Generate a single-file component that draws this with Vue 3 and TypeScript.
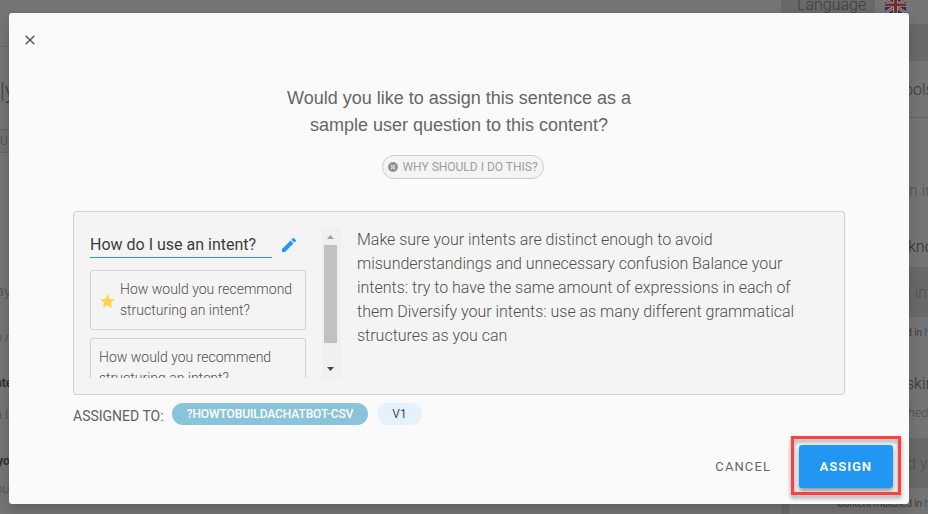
<script setup lang="ts">
import { ref } from 'vue'

interface Intent {
  text: string
  starred: boolean
}

const question = ref('How do I use an intent?')
const intents: Intent[] = [
  { text: 'How would you recemmond structuring an intent?', starred: true },
  { text: 'How would you recommend structuring an intent?', starred: false },
]
</script>

<template>
  <div class="screen">
    <div class="page">
      <aside class="left">
        <div class="l-head"></div>
        <div class="l-title"><span>|y</span></div>
        <div class="l-tab"><span>U</span></div>
        <div class="l-space"></div>
        <div class="l-row say"><span>ay</span></div>
        <div class="l-row note"><span>o r</span></div>
        <div class="l-row strong"><span>nte</span></div>
        <div class="l-row small"><span>a b</span></div>
        <div class="l-row strong second"><span>yo</span></div>
        <div class="l-row small last-line"><span>ou</span></div>
      </aside>
      <main class="right">
        <div class="topbar">
          <span class="language">Language</span>
          <svg class="flag" viewBox="0 0 21 16" preserveAspectRatio="none">
            <rect width="21" height="16" fill="#28305c" />
            <path d="M0 -1L21 15M21 -1L0 15" stroke="#969191" stroke-width="3.4" />
            <path d="M0 -1L21 15M21 -1L0 15" stroke="#793434" stroke-width="1" />
            <path d="M10.5 0V16M0 5.5H21" stroke="#969191" stroke-width="5" />
            <path d="M10.5 0V16M0 5.5H21" stroke="#7d2929" stroke-width="3" />
          </svg>
        </div>
        <div class="band nav"></div>
        <div class="r-row tools">ools</div>
        <div class="r-row first">n in</div>
        <div class="r-row know">kno</div>
        <div class="r-row band reply">n int</div>
        <div class="r-row matched"><span>Content matched in <b>h</b></span></div>
        <div class="r-row asking">skin</div>
        <div class="r-row italic">hed</div>
        <div class="r-row band reply second-reply">d yo</div>
        <div class="r-row matched last"><span>Content matched in <b>h</b></span></div>
      </main>
    </div>

    <section class="dialog" role="dialog">
      <button class="close" aria-label="Close">
        <svg viewBox="0 0 10 10"><path d="M.7.7L9.3 9.3M9.3.7L.7 9.3" stroke="#555" stroke-width="1.4" /></svg>
      </button>
      <h1>Would you like to assign this sentence as a<br />sample user question to this content?</h1>
      <button class="why">
        <svg viewBox="0 0 10 10">
          <circle cx="5" cy="5" r="4.9" fill="#8f8f8f" />
          <path d="M3.2 3.2L6.8 6.8M6.8 3.2L3.2 6.8" stroke="#f1f1f1" stroke-width="1.5" />
          <circle cx="5" cy="5" r=".8" fill="#8f8f8f" />
        </svg>
        <span>WHY SHOULD I DO THIS?</span>
      </button>

      <div class="panel">
        <div class="intents">
          <div class="edit">
            <div class="field">{{ question }}</div>
            <svg viewBox="3 3 18 18"><path fill="#2196f3" d="M3 17.25V21h3.75L17.81 9.94l-3.75-3.75L3 17.25zM20.71 7.04a1 1 0 0 0 0-1.41l-2.34-2.34a1 1 0 0 0-1.41 0l-1.83 1.83 3.75 3.75 1.83-1.83z" /></svg>
          </div>
          <div v-for="item in intents" :key="item.text" class="card" :class="{ starred: item.starred }">
            <svg v-if="item.starred" viewBox="2 2 20 19"><path fill="#ffd54f" d="M12 17.27L18.18 21l-1.64-7.03L22 9.24l-7.19-.61L12 2 9.19 8.63 2 9.24l5.46 4.73L5.82 21z" /></svg>
            <span>{{ item.text }}</span>
          </div>
        </div>
        <div class="scroll">
          <svg viewBox="0 0 7 4"><path d="M0 4L3.5 0L7 4z" fill="#a0a0a0" /></svg>
          <div class="thumb"></div>
          <svg class="down" viewBox="0 0 7 4"><path d="M0 0H7L3.5 4z" fill="#464646" /></svg>
        </div>
        <p>Make sure your intents are distinct enough to avoid<br />misunderstandings and unnecessary confusion Balance your<br />intents: try to have the same amount of expressions in each of<br />them Diversify your intents: use as many different grammatical<br />structures as you can</p>
      </div>

      <div class="assigned">
        <span class="label">ASSIGNED TO:</span>
        <span class="chip bot">?HOWTOBUILDACHATBOT-CSV</span>
        <span class="chip version">V1</span>
      </div>
      <footer>
        <button class="cancel">CANCEL</button>
        <div class="highlight"><button class="assign">ASSIGN</button></div>
      </footer>
    </section>
  </div>
</template>

<style>
body { overflow: hidden; }
</style>

<style scoped>
* { box-sizing: border-box; }
.screen { position: relative; width: 928px; height: 514px; overflow: hidden; background: #757575; font-family: Roboto, sans-serif; }
button { border: 0; padding: 0; background: none; font-family: inherit; }
svg { display: block; flex: none; }

.page { display: flex; justify-content: space-between; height: 514px; color: #505050; white-space: nowrap; }
.left { width: 9px; }
.left > div { display: flex; align-items: center; }
.l-head { height: 47px; border-bottom: 1px solid #686868; }
.l-title { height: 82px; padding-top: 5px; font-size: 22px; font-weight: 300; color: #3f3f3f; }
.l-tab { height: 24px; border: solid #656565; border-width: 1px 0; background: #717171; font-size: 12px; color: #565656; }
.l-space { height: 117px; }
.left > .l-row { height: 42px; font-weight: 300; }
.left > .say { font-size: 15px; margin-left: -4px; }
.left > .note { height: 54px; padding-bottom: 4px; font-size: 13px; font-style: italic; margin-left: -5px; }
.left > .strong { height: 34px; font-size: 12px; font-weight: 700; color: #303030; margin-left: -5px; }
.left > .small { height: 28px; font-size: 13px; margin-left: -5px; }
.left > .second { height: 66px; margin-left: -3px; }
.left > .last-line { margin-left: -5px; margin-top: -20px; }

.right { width: 147px; }
.topbar { display: flex; align-items: flex-start; height: 24px; gap: 10px; }
.language { width: 94px; height: 14px; padding-left: 16px; background: #696969; font-size: 16px; line-height: 10px; font-weight: 300; color: #3d3d3d; }
.flag { width: 21px; height: 14px; }
.band { background: #696969; }
.nav { height: 37px; }
.r-row { display: flex; align-items: center; height: 50px; padding-left: 124px; font-size: 16px; font-weight: 300; }
.tools { height: 57px; padding-left: 123px; color: #393939; border-bottom: 1px solid #646464; }
.first { height: 98px; padding: 46px 0 0 128px; }
.know { height: 51px; padding: 9px 0 0 127px; color: #333; }
.reply { padding-left: 121px; }
.second-reply { padding-left: 126px; }
.matched { height: 31px; padding-left: 56px; font-size: 10px; font-weight: 400; color: #3c3c3c; letter-spacing: -.13px; }
.matched b { color: #285a84; font-weight: 400; }
.asking { height: 48px; color: #333; padding: 22px 0 0 125px; }
.italic { height: 42px; padding: 0 0 10px 127px; font-size: 13px; font-style: italic; }
.last { height: 26px; padding: 4px 0 0 48px; border-left: 8px solid #696969; }

.dialog { position: absolute; left: 9px; top: 13px; width: 900px; height: 491px; padding: 22px 64px 0; border-radius: 3px; background: #fafafa; box-shadow: 0 6px 14px rgba(0, 0, 0, .18); }
.close { display: block; width: 10px; height: 10px; margin-left: -48px; }
.close svg { width: 10px; height: 10px; }
h1 { margin: 40px 0 0; text-align: center; font: 400 18px/27px "Liberation Sans", Arial, sans-serif; color: #666; }
.why { display: flex; align-items: center; justify-content: center; gap: 4px; width: 162px; height: 24px; margin: 16px 0 0 309px; border: 1px solid #ccc; border-radius: 12px; background: #f4f4f4; color: #9e9e9e; font-size: 12px; white-space: nowrap; }
.why svg { width: 10px; height: 10px; }

.panel { display: flex; width: 772px; height: 184px; margin-top: 32px; padding: 16px; border: 1px solid #d1d1d1; border-radius: 3px; background: #f4f4f4; }
.intents { width: 216px; height: 150px; overflow: hidden; }
.edit { display: flex; align-items: center; gap: 10px; height: 30px; margin-bottom: 12px; }
.field { width: 182px; height: 30px; border-bottom: 1px solid #2196f3; font-size: 16px; line-height: 33px; color: #3c3c3c; white-space: nowrap; }
.edit svg { width: 14px; height: 14px; margin-top: 3px; }
.card { display: flex; align-items: center; height: 60px; margin-bottom: 8px; padding: 0 8px; border: 1px solid #d1d1d1; border-radius: 3px; font-size: 14px; line-height: 21px; font-weight: 300; color: #505050; }
.starred { padding: 0 9px; gap: 5px; }
.card svg { width: 15px; height: 14px; margin: 2px 0 0 0; }
.card:not(.starred) { padding-right: 25px; }
.scroll { display: flex; flex-direction: column; align-items: center; width: 19px; height: 150px; margin-left: 16px; padding: 7px 2px 7px 0; background: #f0f0f0; }
.scroll svg { width: 7px; height: 4px; }
.thumb { width: 13px; height: 98px; margin-top: 6px; background: #c1c1c1; }
.scroll .down { margin-top: auto; }
p { margin: 0 0 0 16px; font-size: 16px; line-height: 24px; font-weight: 300; color: #505050; white-space: nowrap; letter-spacing: -.01px; }

.assigned { display: flex; align-items: center; height: 22px; margin-top: 8px; }
.label { width: 99px; padding-top: 4px; font-size: 14px; color: #616161; white-space: nowrap; }
.chip { height: 22px; border-radius: 11px; font-size: 12px; line-height: 22px; text-align: center; }
.bot { width: 196px; background: #89c4d9; color: #fff; font-weight: 500; letter-spacing: -.1px; }
.version { width: 45px; margin-left: 9px; background: #e3f2fd; color: #4a4a4a; }
footer { display: flex; justify-content: flex-end; align-items: center; height: 59px; margin: 11px -56px 0 0; }
.cancel { margin: 2px 20px 0 0; font-size: 13px; letter-spacing: 1.1px; color: #666; }
.highlight { display: flex; align-items: center; justify-content: center; width: 110px; height: 59px; padding-top: 1px; border: 3px solid #fb4141; filter: drop-shadow(0 3px 2px rgba(0, 0, 0, .4)); }
.assign { width: 94px; height: 43px; border-radius: 3px; background: #2196f3; color: #fff; font-size: 13px; font-weight: 700; letter-spacing: 1px; }
</style>
